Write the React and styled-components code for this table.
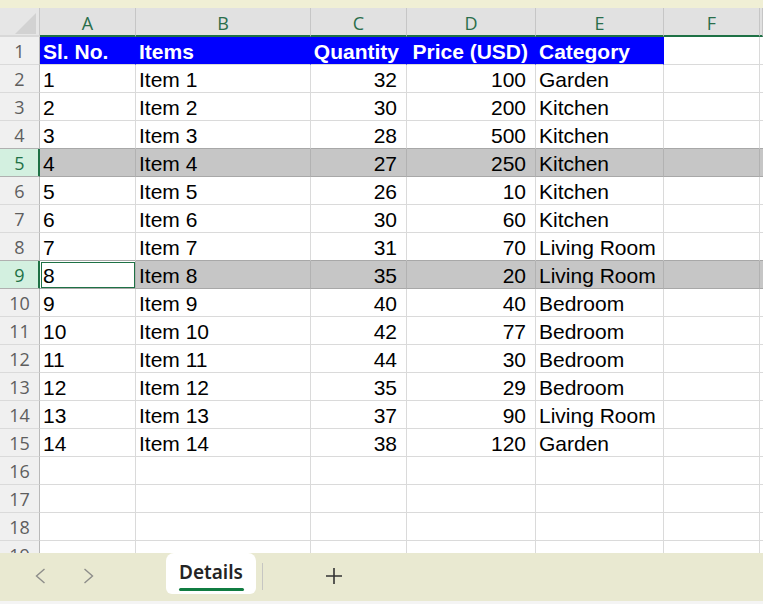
import React from 'react';
import styled, { createGlobalStyle } from 'styled-components';

const COLS = '40px 96px 175px 96px 129px 128px 96px 1fr';
const GREEN = '#1e7145';
const LINE = '#dadada';

const Global = createGlobalStyle`
  html, body { margin: 0; padding: 0; }
  body { width: 763px; height: 604px; overflow: hidden; background: #fff; }
`;

const Page = styled.div`
  display: flex;
  flex-direction: column;
  width: 763px;
  height: 604px;
  overflow: hidden;
  font-family: "Liberation Sans", Arial, sans-serif;
`;

const TopStrip = styled.div`
  flex: none;
  height: 8px;
  background: #f0efd5;
`;

const Sheet = styled.div`
  flex: 1;
  min-height: 0;
  overflow: hidden;
  display: flex;
  flex-direction: column;
  background: #fff;
`;

const HeaderRow = styled.div`
  flex: none;
  display: grid;
  grid-template-columns: ${COLS};
  height: 29px;
`;

const Corner = styled.div`
  display: flex;
  align-items: flex-end;
  justify-content: flex-end;
  padding: 0 3px 1px 0;
  background: #e6e6e6;
  border-right: 1px solid #c8c8c8;
  border-bottom: 2px solid #d8d8d8;
`;

const ColHead = styled.div`
  display: flex;
  align-items: center;
  justify-content: center;
  padding-top: 3px;
  background: #e1e1e1;
  border-right: 1px solid #c6c6c6;
  border-bottom: 2px solid ${GREEN};
  color: #2a6e4b;
  font-family: "Open Sans", "Noto Sans", sans-serif;
  font-size: 18px;
`;

const Row = styled.div`
  flex: none;
  display: grid;
  grid-template-columns: ${COLS};
  height: 28px;
`;

const RowHead = styled.div`
  display: flex;
  align-items: center;
  justify-content: center;
  background: ${(p) => (p.$selected ? '#d3f0e0' : '#f0f0f0')};
  color: ${(p) => (p.$selected ? GREEN : '#5e5e5e')};
  border-right: 1px solid ${(p) => (p.$selected ? GREEN : '#b9b9b9')};
  box-shadow: ${(p) => (p.$selected ? `inset -1px 0 0 ${GREEN}` : 'none')};
  border-bottom: 1px solid ${(p) => (p.$darkBottom ? '#b0b0b0' : LINE)};
  font-family: "Open Sans", "Noto Sans", sans-serif;
  font-size: 18px;
  padding-top: 1px;
`;

const Cell = styled.div`
  display: flex;
  align-items: flex-end;
  justify-content: ${(p) => (p.$right ? 'flex-end' : 'flex-start')};
  padding: 0 ${(p) => (p.$right ? (p.$head ? '7px' : '9px') : '0')} 0 ${(p) => (p.$right ? '0' : '3px')};
  white-space: nowrap;
  font-size: 21px;
  font-weight: ${(p) => (p.$head ? 700 : 400)};
  color: ${(p) => (p.$head ? '#fff' : '#000')};
  background: ${(p) => (p.$head ? '#0000ff' : p.$active ? '#fff' : p.$selected ? '#c6c6c6' : '#fff')};
  border-right: 1px solid ${(p) => (p.$head ? '#0000ff' : p.$selected ? '#b2b2b2' : LINE)};
  border-bottom: 1px solid ${(p) => (p.$darkBottom ? '#a8a8a8' : LINE)};
  outline: ${(p) => (p.$active ? `1px solid ${GREEN}` : 'none')};
  outline-offset: -2px;
  line-height: normal;
`;

const BottomBar = styled.div`
  flex: none;
  display: flex;
  align-items: flex-start;
  height: 48px;
  background: #e9e9d1;
`;

const NavGroup = styled.div`
  display: flex;
  padding-left: 16px;
`;

const NavButton = styled.div`
  display: flex;
  align-items: center;
  justify-content: center;
  width: 48px;
  height: 46px;
`;

const Tab = styled.div`
  display: flex;
  flex-direction: column;
  align-items: center;
  width: 90px;
  height: 41px;
  margin-left: 54px;
  padding-top: 7px;
  box-sizing: border-box;
  background: #fff;
  border-radius: 8px 8px 6px 6px;
`;

const TabLabel = styled.div`
  font-family: "Noto Sans", "Open Sans", sans-serif;
  font-weight: 600;
  font-size: 19px;
  line-height: 24px;
  color: #242424;
`;

const TabUnderline = styled.div`
  width: 65px;
  height: 3px;
  margin-top: 4px;
  border-radius: 2px;
  background: #107c41;
`;

const Separator = styled.div`
  width: 1px;
  height: 27px;
  margin: 10px 0 0 6px;
  background: #c6c6c2;
`;

const PlusButton = styled.div`
  display: flex;
  align-items: center;
  justify-content: center;
  width: 40px;
  height: 45px;
  margin-left: 51px;
`;

const BottomStrip = styled.div`
  flex: none;
  height: 3px;
  background: #f4f4f4;
`;

const data = [
  [1, 'Item 1', 32, 100, 'Garden'],
  [2, 'Item 2', 30, 200, 'Kitchen'],
  [3, 'Item 3', 28, 500, 'Kitchen'],
  [4, 'Item 4', 27, 250, 'Kitchen'],
  [5, 'Item 5', 26, 10, 'Kitchen'],
  [6, 'Item 6', 30, 60, 'Kitchen'],
  [7, 'Item 7', 31, 70, 'Living Room'],
  [8, 'Item 8', 35, 20, 'Living Room'],
  [9, 'Item 9', 40, 40, 'Bedroom'],
  [10, 'Item 10', 42, 77, 'Bedroom'],
  [11, 'Item 11', 44, 30, 'Bedroom'],
  [12, 'Item 12', 35, 29, 'Bedroom'],
  [13, 'Item 13', 37, 90, 'Living Room'],
  [14, 'Item 14', 38, 120, 'Garden'],
];

const header = ['Sl. No.', 'Items', 'Quantity', 'Price (USD)', 'Category'];
const rightCols = [false, false, true, true, false];
const letters = ['A', 'B', 'C', 'D', 'E', 'F', ''];
const SELECTED = [5, 9];
const TOTAL_ROWS = 19;

const Chevron = ({ dir }) => (
  <svg width="11" height="16" viewBox="0 0 11 16">
    <polyline
      points={dir === 'left' ? '9.5,1 1.5,8 9.5,15' : '1.5,1 9.5,8 1.5,15'}
      fill="none"
      stroke="#8d8d8a"
      strokeWidth="1.4"
    />
  </svg>
);

export default function App() {
  const rows = [];
  for (let r = 1; r <= TOTAL_ROWS; r++) {
    const selected = SELECTED.includes(r);
    const darkBottom = selected || SELECTED.includes(r + 1);
    let values = null;
    if (r === 1) values = header;
    else if (r - 2 < data.length) values = data[r - 2];
    const cells = [];
    for (let c = 0; c < 7; c++) {
      const isData = values && c < 5;
      const active = r === 9 && c === 0;
      cells.push(
        <Cell
          key={c}
          $head={r === 1 && c < 5}
          $right={isData && rightCols[c]}
          $selected={selected}
          $active={active}
          $darkBottom={darkBottom}
        >
          {isData ? values[c] : null}
        </Cell>
      );
    }
    rows.push(
      <Row key={r}>
        <RowHead $selected={selected} $darkBottom={darkBottom}>{r}</RowHead>
        {cells}
      </Row>
    );
  }

  return (
    <Page>
      <Global />
      <TopStrip />
      <Sheet>
        <HeaderRow>
          <Corner>
            <svg width="21" height="21" viewBox="0 0 21 21">
              <polygon points="21,0 21,21 0,21" fill="#d2d2d2" />
            </svg>
          </Corner>
          {letters.map((l, i) => (
            <ColHead key={i}>{l}</ColHead>
          ))}
        </HeaderRow>
        {rows}
      </Sheet>
      <BottomBar>
        <NavGroup>
          <NavButton><Chevron dir="left" /></NavButton>
          <NavButton><Chevron dir="right" /></NavButton>
        </NavGroup>
        <Tab>
          <TabLabel>Details</TabLabel>
          <TabUnderline />
        </Tab>
        <Separator />
        <PlusButton>
          <svg width="18" height="18" viewBox="0 0 18 18">
            <path d="M9 1v16M1 9h16" stroke="#333" strokeWidth="1.6" fill="none" />
          </svg>
        </PlusButton>
      </BottomBar>
      <BottomStrip />
    </Page>
  );
}
